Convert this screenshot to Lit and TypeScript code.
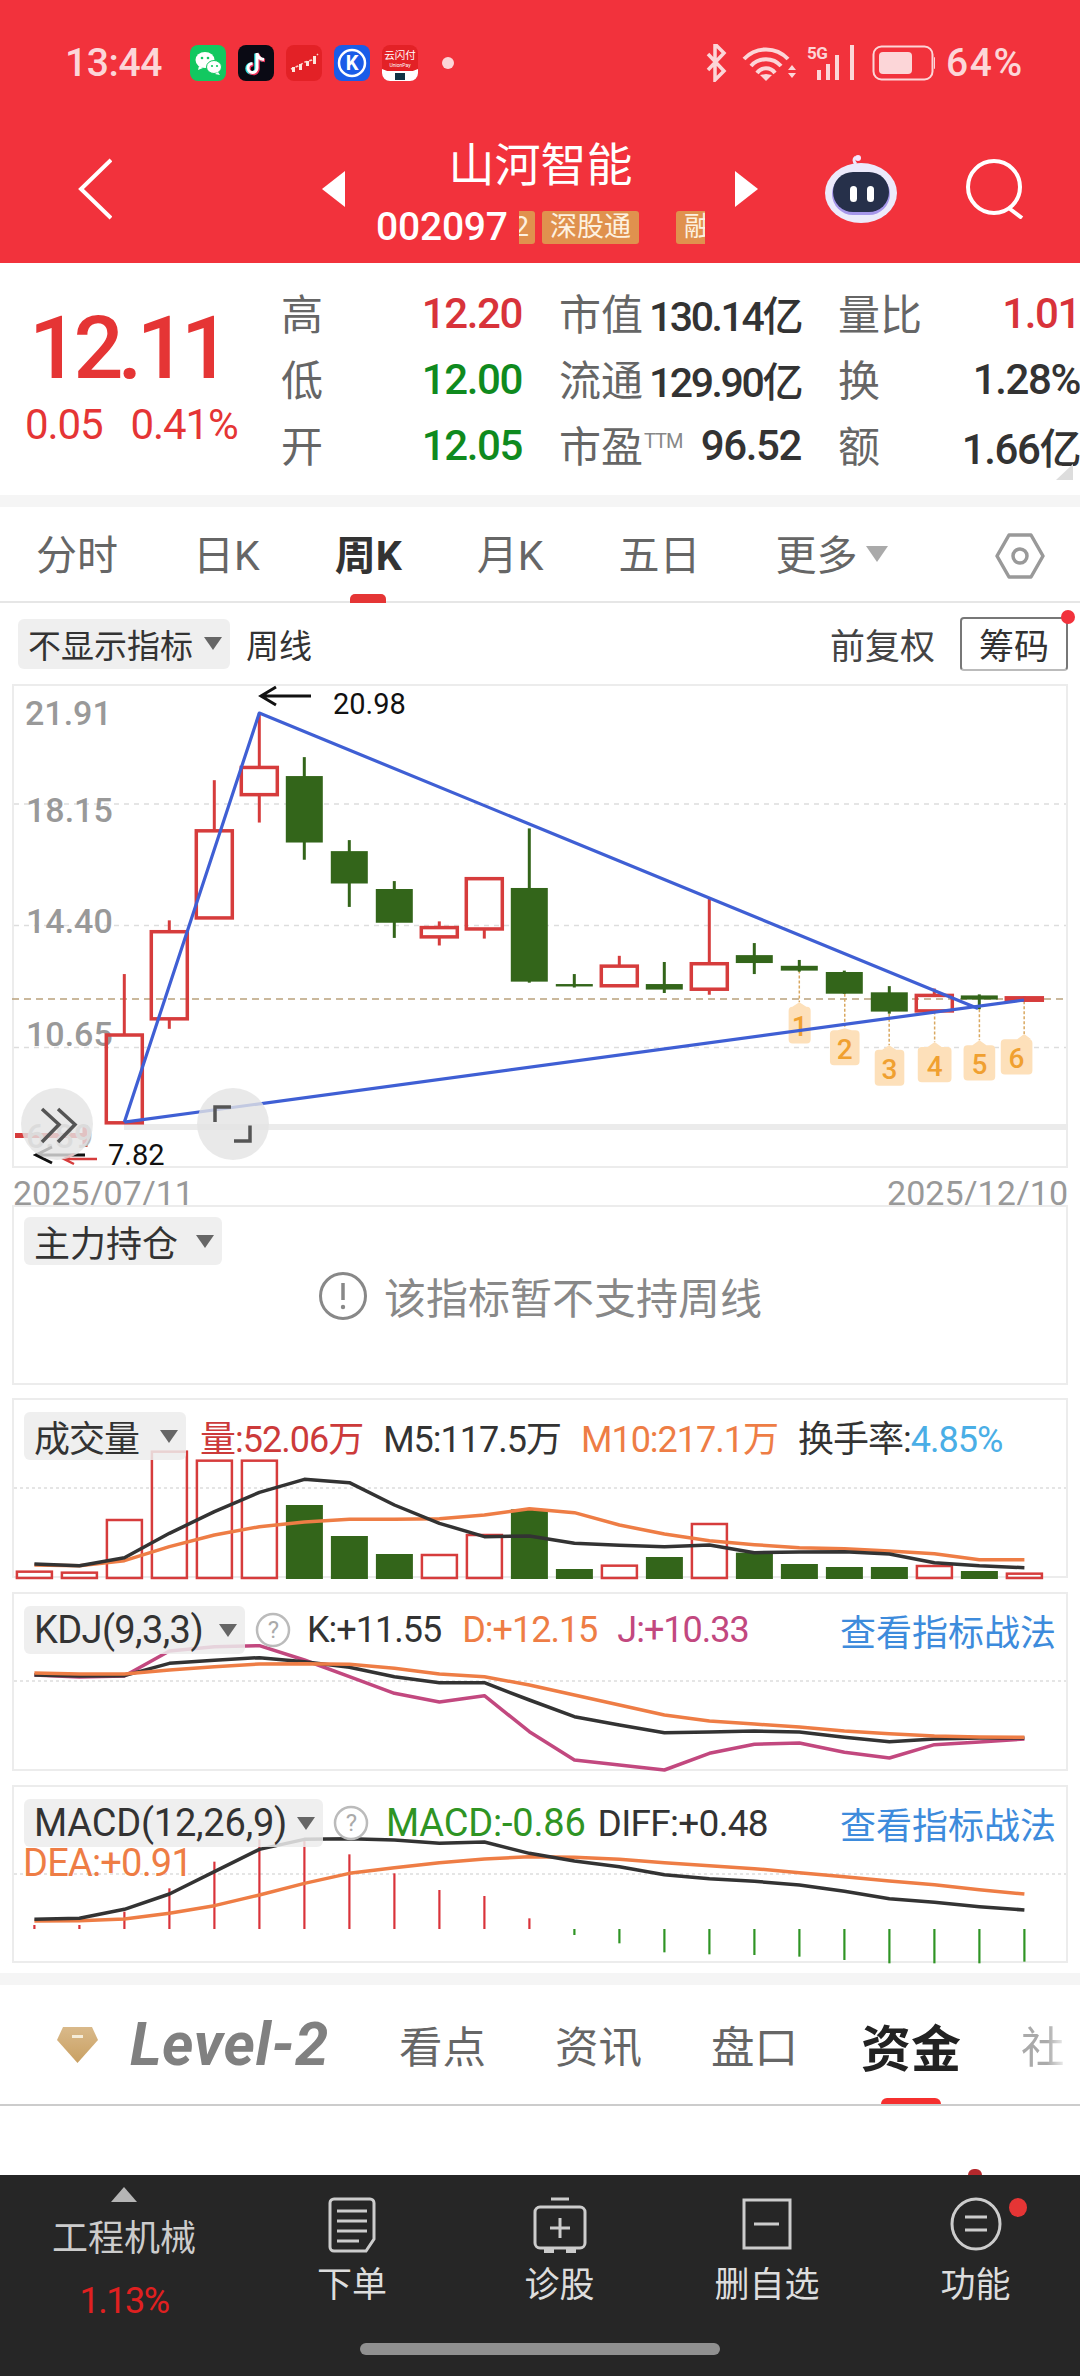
import { LitElement, html, css, svg } from "lit";
import { customElement } from "lit/decorators.js";

const Z = (v: number) => v / 2.904;
const Y = (v: number) => 670 + v / 2.904;
const cx = (i: number) => 124.3 + 45 * i;
const vx = (i: number) => 34.4 + 45 * i;
const RED = "#d63c3c";
const GREEN = "#33651a";

const candles: [string, number, number, number, number][] = [
  ["r", 883, 1060, 1315, 1315], ["r", 727, 760, 1013, 1042], ["r", 320, 467, 720, 720], ["r", 125, 283, 362, 443],
  ["g", 253, 308, 501, 551], ["g", 494, 526, 620, 688], ["g", 613, 636, 734, 778], ["r", 730, 748, 775, 800],
  ["r", 606, 606, 752, 780], ["g", 460, 633, 905, 908], ["g", 883, 912, 919, 922], ["r", 830, 860, 917, 917],
  ["g", 848, 912, 928, 938], ["r", 663, 853, 927, 943], ["g", 793, 828, 851, 883], ["g", 842, 859, 873, 876],
  ["g", 873, 877, 940, 940], ["g", 918, 936, 992, 998], ["r", 925, 945, 990, 992], ["g", 942, 945, 957, 985],
  ["r", 948, 952, 959, 962],
];
const tags: [number, number, number, number, number, number, number, string][] = [
  [753, 873, 965, 722, 786, 978, 1085, "1"], [885, 940, 1040, 842, 928, 1046, 1148, "2"], [1014, 998, 1090, 972, 1058, 1103, 1207, "3"],
  [1146, 992, 1080, 1097, 1195, 1095, 1197, "4"], [1276, 985, 1075, 1230, 1322, 1090, 1192, "5"], [1406, 962, 1057, 1338, 1430, 1072, 1175, "6"],
];
const volTops = [545, 548, 390, 185, 212, 212, 345, 438, 492, 495, 435, 358, 537, 527, 501, 402, 488, 522, 531, 531, 528, 543, 551];
const volRed = [0, 1, 2, 3, 4, 5, 9, 10, 13, 15, 20, 22];
const m5 = [522, 527, 503, 430, 365, 307, 268, 278, 345, 400, 440, 438, 460, 466, 470, 465, 488, 486, 485, 492, 518, 527, 533];
const m10 = [525, 527, 512, 470, 435, 410, 396, 388, 388, 386, 375, 356, 368, 405, 432, 452, 464, 473, 476, 483, 491, 509, 509];
const kK = [285, 288, 287, 250, 241, 233, 245, 262, 290, 308, 308, 360, 410, 435, 458, 456, 453, 456, 472, 485, 477, 474, 474];
const kD = [279, 282, 282, 270, 260, 252, 251, 253, 265, 282, 290, 315, 345, 375, 405, 423, 432, 441, 453, 461, 468, 471, 472];
const kJ = [285, 291, 288, 213, 200, 197, 240, 290, 340, 366, 347, 455, 540, 555, 570, 520, 493, 489, 517, 534, 494, 486, 477];
const mBars = [1035, 1035, 995, 925, 845, 778, 780, 823, 880, 930, 948, 1015, 1065, 1090, 1117, 1123, 1125, 1130, 1140, 1150, 1150, 1150, 1145];
const diff = [1018, 1015, 988, 942, 875, 808, 778, 776, 780, 790, 786, 820, 843, 860, 884, 896, 904, 915, 934, 956, 967, 980, 990];
const dea = [1023, 1022, 1017, 1000, 977, 945, 910, 880, 863, 848, 837, 830, 832, 838, 848, 857, 866, 878, 890, 903, 914, 929, 942];

const line = (vals: number[], base: number, color: string, w = 3.5) =>
  svg`<polyline fill="none" stroke=${color} stroke-width=${w} stroke-linejoin="round" points=${vals.map((v, i) => `${vx(i)},${base + v / 3}`).join(" ")}></polyline>`;

@customElement("app-root")
export class AppRoot extends LitElement {
  static styles = css`
    :host { display: block; width: 1080px; height: 2376px; overflow: hidden; background: #fff; font-family: Roboto, "Noto Sans CJK SC", sans-serif; color: #333; }
    .hdr { height: 263px; background: #f2323c; display: flex; flex-direction: column; }
    .status { height: 90px; padding: 43px 56px 0 65px; box-sizing: border-box; display: flex; align-items: flex-start; color: #fcd6d8; }
    .time { font-size: 39px; line-height: 40px; font-weight: 500; width: 125px; letter-spacing: -.4px; }
    .apps { display: flex; gap: 12px; margin-top: 2px; }
    .apps svg { display: block; }
    .sdot { width: 12px; height: 12px; border-radius: 50%; background: #fcd6d8; margin: 14px 0 0 24px; }
    .sright { margin-left: auto; display: flex; align-items: center; height: 40px; }
    .sright svg { display: block; width: 232px; }
    .pct { font-size: 39px; font-weight: 500; line-height: 40px; margin-left: 11px; letter-spacing: 1.6px; width: 78px; white-space: nowrap; }
    .nav { height: 173px; padding-top: 25px; box-sizing: border-box; display: flex; align-items: center; padding-left: 78px; }
    .nav svg { display: block; flex: none; }
    .tl { margin-left: 210px; }
    .mid { width: 329px; margin-left: 31px; padding-top: 6px; display: flex; flex-direction: column; align-items: center; color: #fff; }
    .title { font-size: 46px; line-height: 46px; padding-top: 2px; }
    .coderow { width: 100%; margin-top: 23px; display: flex; align-items: center; height: 33px; }
    .code { font-size: 39px; width: 143px; letter-spacing: -.2px; line-height: 33px; font-weight: 500; }
    .strip { width: 186px; overflow: hidden; display: flex; height: 33px; }
    .tag { flex: none; background: #e0914e; color: #fdf1e0; font-size: 27px; line-height: 33px; height: 33px; padding: 0 8px; border-radius: 3px; }
    .tag.l2tag { margin-left: -26px; width: 42px; padding: 0 6px 0 0; text-align: right; margin-right: 7px; box-sizing: border-box; }
    .tag.m { margin-left: 37px; }
    .tr { margin-left: 30px; }
    .robot { margin-left: 67px; }
    .search { margin-left: 69px; }

    .quote { height: 232px; display: flex; box-sizing: border-box; position: relative; }
    .pr { width: 281px; box-sizing: border-box; padding: 47px 0 0 26px; color: #e53535; flex: none; }
    .big { font-size: 88px; line-height: 76px; font-weight: 500; letter-spacing: -5.6px; margin-left: 3px; }
    .subs { display: flex; gap: 28px; margin-top: 21px; font-size: 42px; line-height: 36px; letter-spacing: -1.1px; margin-left: -1px; }
    .qgrid { display: grid; grid-template-columns: 241px 242px 242px; column-gap: 37px; grid-auto-rows: 66px; padding-top: 17px; height: 198px; }
    .cell { display: flex; justify-content: space-between; align-items: center; font-size: 40px; white-space: nowrap; }
    .lb { color: #666; font-size: 42px; margin-bottom: 4px; }
    .val { font-size: 42px; letter-spacing: -1.4px; color: #333; font-weight: 500; }
    .val.m { font-size: 41px; letter-spacing: -2.4px; }
    .val.r { color: #d8333a; }
    .val.g { color: #0f8a1e; }
    .ttm { font-size: 20px; color: #888; vertical-align: 14px; letter-spacing: -1px; margin-left: 1px; }
    .corner { position: absolute; right: 7px; bottom: 15px; width: 0; height: 0; border-left: 17px solid transparent; border-bottom: 16px solid #ddd; }
    .band { height: 12px; background: #f5f5f5; }

    .tabs { height: 96px; box-sizing: border-box; border-bottom: 2px solid #e6e6e6; display: flex; align-items: center; padding: 4px 35px 0 36px; gap: 75px; color: #666; font-size: 41px; }
    .tab { position: relative; white-space: nowrap; line-height: 50px; }
    .tab.on { font-weight: 700; color: #333; }
    .tab.on::after { content: ""; position: absolute; left: 15px; width: 36px; height: 9px; bottom: -22px; background: #e53535; border-radius: 5px 5px 0 0; }
    .tab .tri { display: inline-block; width: 0; height: 0; border: 11px solid transparent; border-top: 16px solid #aaa; border-bottom: 0; margin-left: 8px; vertical-align: 8px; }
    .hex { margin-left: auto; display: block; }

    .tool { height: 81px; display: flex; align-items: center; padding: 0 12px 0 18px; font-size: 33px; }
    .chip { display: inline-flex; align-items: center; height: 48px; background: rgba(236,236,236,.85); border-radius: 6px; padding: 0 8px 0 10px; font-size: 36px; color: #333; white-space: nowrap; position: relative; z-index: 1; box-sizing: border-box; justify-content: space-between; flex: none; }
    .chip i { width: 0; height: 0; border: 9px solid transparent; border-top: 13px solid #666; border-bottom: 0; flex: none; }
    .tool .chip { height: 50px; width: 212px; font-size: 33px; }
    .tool .w { margin-left: 16px; }
    .fq { margin-left: auto; color: #444; font-size: 35px; }
    .cm { margin-left: 25px; width: 108px; height: 54px; box-sizing: border-box; border: 2px solid #777; border-bottom-color: #bbb; border-radius: 4px; display: flex; align-items: center; justify-content: center; font-size: 35px; position: relative; }
    .cm::after { content: ""; position: absolute; right: -9px; top: -9px; width: 14px; height: 14px; border-radius: 50%; background: #f2323c; }

    .panel { margin: 0 12px; border: 2px solid #ececec; box-sizing: border-box; position: relative; }
    .panel > svg { position: absolute; left: -14px; top: -2px; width: 1080px; display: block; overflow: visible; }
    .main { height: 484px; }
    .dates { height: 37px; padding: 10px 12px 0 13px; box-sizing: border-box; display: flex; justify-content: space-between; color: #999; font-size: 34px; line-height: 31px; }
    .hold { height: 180px; margin-bottom: 13px; padding: 10px; }
    .hold .chip { width: 198px; letter-spacing: 0; }
    .empty { display: flex; align-items: center; justify-content: center; gap: 16px; margin-top: 0; color: #888; font-size: 42px; }
    .empty svg { display: block; }
    .vol { height: 180px; margin-bottom: 14px; }
    .kdj { height: 179px; margin-bottom: 14px; }
    .macd { height: 178px; margin-bottom: 10px; }
    .ph { display: flex; align-items: center; padding: 10px 0 0 10px; font-size: 36px; position: relative; white-space: nowrap; letter-spacing: -1px; }
    .ph .chip.a { width: 162px; }
    .ph .chip.b { width: 221px; font-size: 38px; letter-spacing: -.6px; }
    .ph .chip.c { width: 299px; font-size: 38px; letter-spacing: -.2px; }
    .ph .q { margin-left: 10px; display: block; }
    .ph .lnk { margin-left: auto; margin-right: 10px; color: #3d8bdc; font-size: 36px; letter-spacing: 0; }
    .s1 { margin-left: 14px; } .s2 { margin-left: 20px; } .s3 { margin-left: 16px; } .s4 { margin-left: 21px; } .s5 { margin-left: 20px; }
    .s6 { margin-left: 17px; font-size: 38px; letter-spacing: -.2px; } .s7 { margin-left: 12px; font-size: 37px; letter-spacing: -.7px; }
    .c-r { color: #cc3a3a; } .c-o { color: #ee7d45; } .c-k { color: #333; } .c-b { color: #4aaee6; } .c-p { color: #c2487f; } .c-g { color: #2f9424; }
    .dea { position: relative; margin: -3px 0 0 9px; font-size: 38px; line-height: 34px; color: #ee7d45; letter-spacing: -.8px; }

    .l2 { height: 121px; box-sizing: border-box; border-bottom: 2px solid #ccc; display: flex; align-items: center; padding: 0 0 0 57px; overflow: hidden; color: #666; font-size: 43.5px; white-space: nowrap; }
    .l2 .gem { display: block; flex: none; }
    .lv { font-size: 60px; font-weight: 700; font-style: italic; color: #808080; margin: 0 70px 0 32px; letter-spacing: .6px; line-height: 60px; }
    .l2 span.t { position: relative; margin-right: 69px; flex: none; }
    .l2 span.act { font-size: 50px; font-weight: 700; color: #222; margin-left: -6px; margin-right: 60px; }
    .l2 span.act::after { content: ""; position: absolute; left: 20px; width: 60px; height: 12px; bottom: -29px; background: #f5302f; border-radius: 6px 6px 0 0; }
    .l2 span.fade { color: #aaa; -webkit-mask-image: linear-gradient(to right, #000 30%, transparent 55%); mask-image: linear-gradient(to right, #000 30%, transparent 55%); }
    .gap { height: 69px; position: relative; }
    .gap::after { content: ""; position: absolute; left: 968px; bottom: 0; width: 14px; height: 6px; border-radius: 7px 7px 0 0; background: #b5282c; }

    .bar { height: 201px; background: #262626; display: grid; grid-template-columns: 248px 208px 207px 208px 209px; color: #ddd; position: relative; }
    .bi { display: flex; flex-direction: column; align-items: center; padding-top: 22px; font-size: 35px; line-height: 44px; white-space: nowrap; }
    .bi svg { display: block; margin-bottom: 11px; }
    .b0 { padding-top: 12px; }
    .b0 .up { width: 0; height: 0; border: 13px solid transparent; border-bottom: 15px solid #b5b5b5; border-top: 0; }
    .b0 .nm { margin-top: 15px; font-size: 36px; line-height: 44px; color: #ccc; }
    .b0 .p { margin-top: 18px; font-size: 36px; line-height: 44px; color: #e02020; letter-spacing: -1.5px; }
    .home { position: absolute; left: 360px; width: 360px; top: 168px; height: 12px; background: #909090; border-radius: 6px; }
    .dot2 { position: absolute; left: 1009px; top: 23px; width: 18px; height: 19px; border-radius: 50%; background: #e53535; }
    svg text { font-family: Roboto, "Noto Sans CJK SC", sans-serif; }
    .ax { fill: #999; font-size: 34px; font-weight: 500; }
    .anno { fill: #111; font-size: 29px; }
    .tn { fill: #f0a030; font-size: 28px; text-anchor: middle; font-weight: 500; }
    .qm { fill: #aaa; font-size: 24px; text-anchor: middle; }
  `;

  private qIcon() {
    return html`<svg class="q" width="36" height="36" viewBox="0 0 36 36"><circle cx="18" cy="18" r="16" fill="#fff" stroke="#bbb" stroke-width="2.5"></circle><text x="18" y="26" class="qm">?</text></svg>`;
  }

  private statusIcons() {
    return html`
      <div class="apps">
        <svg width="36" height="36" viewBox="0 0 36 36"><rect width="36" height="36" rx="8" fill="#12c860"/><ellipse cx="15" cy="15" rx="9.5" ry="8" fill="#fff"/><path d="M9 21l-1 4 5-2z" fill="#fff"/><ellipse cx="24" cy="22" rx="7.5" ry="6.5" fill="#fff" stroke="#12c860"/><path d="M28 27l2 3-5-1z" fill="#fff"/><circle cx="12" cy="13" r="1.3" fill="#12c860"/><circle cx="18" cy="13" r="1.3" fill="#12c860"/><circle cx="22" cy="21" r="1.1" fill="#12c860"/><circle cx="27" cy="21" r="1.1" fill="#12c860"/></svg>
        <svg width="36" height="36" viewBox="0 0 36 36"><rect width="36" height="36" rx="8" fill="#0a0a14"/><path d="M19 8v15a4.5 4.5 0 1 1-4.500-4.500M19 8c.5 4 3 6 7 6.500" fill="none" stroke="#2ce8e8" stroke-width="3.500" transform="translate(-1 .5)"/><path d="M19 8v15a4.500 4.500 0 1 1-4.500-4.500M19 8c.5 4 3 6 7 6.500" fill="none" stroke="#f0305a" stroke-width="3.500" transform="translate(1 1)"/><path d="M19 8v15a4.500 4.500 0 1 1-4.500-4.500M19 8c.5 4 3 6 7 6.500" fill="none" stroke="#fff" stroke-width="3"/></svg>
        <svg width="36" height="36" viewBox="0 0 36 36"><rect width="36" height="36" rx="8" fill="#e32126"/><path d="M5 24l7-3 7-4 7-2 6-6" fill="none" stroke="#fbd0c8" stroke-width="1.500" stroke-dasharray="3 2"/><g fill="#fde6dc"><rect x="6" y="22" width="3" height="5"/><rect x="13" y="19" width="3" height="6"/><rect x="20" y="16" width="3" height="5"/><rect x="27" y="11" width="3" height="8"/></g></svg>
        <svg width="36" height="36" viewBox="0 0 36 36"><rect width="36" height="36" rx="8" fill="#1a5ce8"/><circle cx="18" cy="18" r="13" fill="none" stroke="#fff" stroke-width="2.500"/><text x="18" y="25" font-size="20" font-weight="700" fill="#fff" text-anchor="middle">K</text></svg>
        <svg width="36" height="36" viewBox="0 0 36 36"><rect width="36" height="36" rx="8" fill="#e32126"/><path d="M0 26h36v2a8 8 0 0 1-8 8H8a8 8 0 0 1-8-8z" fill="#fff"/><path d="M0 24q18 8 36 0v4H0z" fill="#fff"/><rect x="13" y="28" width="10" height="7" fill="#134"/><text x="18" y="14" font-size="10.500" fill="#fff" text-anchor="middle">云闪付</text><text x="18" y="22" font-size="5" fill="#fff" text-anchor="middle">UnionPay</text></svg>
      </div>
      <div class="sdot"></div>
      <div class="sright">
        <svg height="38" viewBox="703 45 232 38">
          <path d="M708 55l16 17-9 9V45l9 9-16 17" fill="none" stroke="#fcd6d8" stroke-width="3.500"/>
          <path d="M744 60a30 30 0 0 1 44 0M751 67a20 20 0 0 1 30 0M757 74a11 11 0 0 1 18 0" fill="none" stroke="#fcd6d8" stroke-width="4"/>
          <path d="M760 76l6-1 6 1-6 6z" fill="#fcd6d8"/>
          <path d="M788 71l4-5 4 5zM788 74l4 5 4-5z" fill="#fcd6d8"/>
          <text x="807" y="60" font-size="17" font-weight="700" fill="#fcd6d8" letter-spacing="-.5">5G</text>
          <g fill="#fcd6d8"><rect x="817" y="71" width="4" height="10"/><rect x="826" y="65" width="4" height="16"/><rect x="835" y="56" width="4" height="25"/><rect x="850" y="46" width="4" height="35" /></g>
          <rect x="873.500" y="47.500" width="59" height="33" rx="8" fill="none" stroke="#fcd6d8" stroke-width="2"/>
          <rect x="879" y="53" width="33" height="22" rx="4" fill="#fcd6d8"/>
          <rect x="934" y="58" width="3" height="12" rx="1" fill="#fcd6d8"/>
        </svg>
        <span class="pct">64%</span>
      </div>`;
  }

  private mainChart() {
    return svg`<svg height="484" viewBox="0 684 1080 484">
      ${[804, 925.5, 1047.4].map((y) => svg`<line x1="14" x2="1066" y1=${y} y2=${y} stroke="#ddd" stroke-width="1.500" stroke-dasharray="5 5"></line>`)}
      <rect x="124" y="1124" width="944" height="6" fill="#ebebeb"></rect>
      <line x1="12" x2="1064" y1="999" y2="999" stroke="#b9a17c" stroke-width="1.500" stroke-dasharray="7 5"></line>
      <text class="ax" x="25" y="725">21.91</text>
      <text class="ax" x="26" y="821.500">18.15</text>
      <text class="ax" x="26" y="933">14.40</text>
      <text class="ax" x="26" y="1046">10.65</text>
      ${tags.map((t) => svg`<line x1=${540 + Z(t[0])} x2=${540 + Z(t[0])} y1=${Y(t[1])} y2=${Y(t[2])} stroke="#d9a860" stroke-width="1.500" stroke-dasharray="3 2"></line>
        <path fill="#fde0ba" d="M${540 + Z(t[3]) + 4} ${Y(t[5])} H${540 + Z(t[0]) - 7} L${540 + Z(t[0])} ${Y(t[2])} L${540 + Z(t[0]) + 7} ${Y(t[5])} H${540 + Z(t[4]) - 4} q4 0 4 4 V${Y(t[6]) - 4} q0 4 -4 4 H${540 + Z(t[3]) + 4} q-4 0 -4 -4 V${Y(t[5]) + 4} q0 -4 4 -4z"></path>
        <text class="tn" x=${540 + Z((t[3] + t[4]) / 2)} y=${Y((t[5] + t[6]) / 2) + 11}>${t[7]}</text>`)}
      ${candles.map((c, i) => {
        const x = cx(i);
        return c[0] === "r"
          ? svg`<line x1=${x} x2=${x} y1=${Y(c[1])} y2=${Y(c[2])} stroke=${RED} stroke-width="3"></line>
                <line x1=${x} x2=${x} y1=${Y(c[3])} y2=${Y(c[4])} stroke=${RED} stroke-width="3"></line>
                <rect x=${x - 18} y=${Y(c[2])} width="36" height=${Z(c[3] - c[2])} fill="none" stroke=${RED} stroke-width="3.500"></rect>`
          : svg`<line x1=${x} x2=${x} y1=${Y(c[1])} y2=${Y(c[4])} stroke=${GREEN} stroke-width="3"></line>
                <rect x=${x - 18.5} y=${Y(c[2])} width="37" height=${Z(c[3] - c[2])} fill=${GREEN}></rect>`;
      })}
      <g fill="none" stroke="#3f5fd4" stroke-width="3.200" stroke-linejoin="round">
        <polyline points="${Z(361)},${Y(1313)} ${Z(753)},${Y(125)} 978,1008.500"></polyline>
        <polyline points="${Z(361)},${Y(1313)} 1024,1000"></polyline>
      </g>
      <path d="M311 696H261M276 687l-15 9 15 9" fill="none" stroke="#111" stroke-width="3"></path>
      <text class="anno" x="333" y="714">20.98</text>
      <path d="M15 1135.500H85M85 1125v22" stroke=${RED} stroke-width="5" fill="none"></path>
      <text x="26" y="1148" font-size="34" font-weight="500" fill="#bbb">6.89</text>
      <path d="M85 1155H36M52 1147l-16 8 16 8" fill="none" stroke="#111" stroke-width="3"></path>
      <path d="M97 1159H64M74 1154l-10 5 10 5" fill="none" stroke=${RED} stroke-width="2.500"></path>
      <text class="anno" x="108" y="1165">7.82</text>
      <circle cx="57" cy="1124" r="36" fill="#e4e4e4" fill-opacity=".8"></circle>
      <circle cx="233" cy="1124" r="36" fill="#e4e4e4" fill-opacity=".8"></circle>
      <path d="M42 1109l17 15.500-17 17.500M58 1109l17 15.500-17 17.500" fill="none" stroke="#555" stroke-width="3.500"></path>
      <path d="M215 1122v-15h16M234 1141h16v-15.500" fill="none" stroke="#555" stroke-width="3.500"></path>
    </svg>`;
  }

  private volChart() {
    return svg`<svg height="180" viewBox="0 1398 1080 180">
      <line x1="14" x2="1066" y1="1488" y2="1488" stroke="#ddd" stroke-width="1.500" stroke-dasharray="3 3"></line>
      ${volTops.map((t, i) => {
        const y = 1390 + t / 3;
        return volRed.includes(i)
          ? svg`<rect x=${vx(i) - 17.5} y=${y} width="35" height=${1578 - y} fill="none" stroke=${RED} stroke-width="2.500"></rect>`
          : svg`<rect x=${vx(i) - 18.5} y=${y} width="37" height=${1579 - y} fill=${GREEN}></rect>`;
      })}
      ${line(m10, 1390, "#ee7d45")}
      ${line(m5, 1390, "#333")}
    </svg>`;
  }

  private kdjChart() {
    return svg`<svg height="179" viewBox="0 1592 1080 179">
      <line x1="14" x2="1066" y1="1681" y2="1681" stroke="#ddd" stroke-width="1.500" stroke-dasharray="3 3"></line>
      ${line(kJ, 1580, "#c2487f")}
      ${line(kK, 1580, "#333")}
      ${line(kD, 1580, "#ee7d45")}
    </svg>`;
  }

  private macdChart() {
    return svg`<svg height="178" viewBox="0 1785 1080 178">
      <line x1="14" x2="1066" y1="1874" y2="1874" stroke="#ddd" stroke-width="1.500" stroke-dasharray="3 3"></line>
      ${mBars.map((t, i) => {
        const y = 1580 + t / 3;
        return i < 12
          ? svg`<line x1=${vx(i)} x2=${vx(i)} y1=${y} y2="1929" stroke="#d9333a" stroke-width="2.200"></line>`
          : svg`<line x1=${vx(i)} x2=${vx(i)} y1="1929" y2=${y} stroke="#2f9424" stroke-width="2.200"></line>`;
      })}
      ${line(dea, 1580, "#ee7d45")}
      ${line(diff, 1580, "#333")}
    </svg>`;
  }

  render() {
    return html`
      <div class="hdr">
        <div class="status"><span class="time">13:44</span>${this.statusIcons()}</div>
        <div class="nav">
          <svg width="34" height="62" viewBox="0 0 34 62"><path d="M33 2L3 31l30 29" fill="none" stroke="#fff" stroke-width="4"/></svg>
          <svg class="tl" width="23" height="36" viewBox="0 0 23 36"><path d="M23 0v36L0 18z" fill="#fff"/></svg>
          <div class="mid">
            <div class="title">山河智能</div>
            <div class="coderow"><span class="code">002097</span>
              <div class="strip"><span class="tag l2tag">L2</span><span class="tag">深股通</span><span class="tag m">融资融券</span></div>
            </div>
          </div>
          <svg class="tr" width="23" height="36" viewBox="0 0 23 36"><path d="M0 0v36l23-18z" fill="#fff"/></svg>
          <svg class="robot" width="72" height="68" viewBox="0 0 72 68"><path d="M31 9q-4-4 0-7" fill="none" stroke="#ece9fb" stroke-width="3"/><circle cx="33" cy="3" r="3" fill="#f5e6ff"/><ellipse cx="36" cy="38" rx="36" ry="30" fill="#eceafb"/><rect x="7" y="18" width="58" height="42" rx="21" fill="#a596ea"/><rect x="8" y="17" width="56" height="40" rx="20" fill="#26304a"/><rect x="25" y="31" width="7" height="16" rx="3.500" fill="#fff"/><rect x="42" y="31" width="7" height="16" rx="3.500" fill="#fff"/></svg>
          <svg class="search" width="58" height="60" viewBox="0 0 58 60"><circle cx="28" cy="28" r="26" fill="none" stroke="#fff" stroke-width="4"/><path d="M44 50l12 9" stroke="#fff" stroke-width="4"/></svg>
        </div>
      </div>

      <div class="quote">
        <div class="pr"><div class="big">12.11</div><div class="subs"><span>0.05</span><span>0.41%</span></div></div>
        <div class="qgrid">
          <div class="cell"><span class="lb">高</span><span class="val r">12.20</span></div>
          <div class="cell"><span class="lb">市值</span><span class="val m">130.14亿</span></div>
          <div class="cell"><span class="lb">量比</span><span class="val r">1.01</span></div>
          <div class="cell"><span class="lb">低</span><span class="val g">12.00</span></div>
          <div class="cell"><span class="lb">流通</span><span class="val m">129.90亿</span></div>
          <div class="cell"><span class="lb">换</span><span class="val">1.28%</span></div>
          <div class="cell"><span class="lb">开</span><span class="val g">12.05</span></div>
          <div class="cell"><span class="lb">市盈<span class="ttm">TTM</span></span><span class="val">96.52</span></div>
          <div class="cell"><span class="lb">额</span><span class="val">1.66亿</span></div>
        </div>
        <div class="corner"></div>
      </div>
      <div class="band"></div>

      <div class="tabs">
        <span class="tab">分时</span><span class="tab">日K</span><span class="tab on">周K</span><span class="tab">月K</span><span class="tab">五日</span>
        <span class="tab">更多<span class="tri"></span></span>
        <svg class="hex" width="50" height="46" viewBox="0 0 50 46"><path d="M14 2h22l12 21-12 21H14L2 23z" fill="none" stroke="#999" stroke-width="3.500" stroke-linejoin="round"/><circle cx="25" cy="23" r="7" fill="none" stroke="#999" stroke-width="3.500"/></svg>
      </div>
      <div class="tool">
        <span class="chip">不显示指标<i></i></span><span class="w">周线</span>
        <span class="fq">前复权</span><span class="cm">筹码</span>
      </div>

      <div class="panel main">${this.mainChart()}</div>
      <div class="dates"><span>2025/07/11</span><span>2025/12/10</span></div>

      <div class="panel hold">
        <span class="chip">主力持仓<i></i></span>
        <div class="empty">
          <svg width="50" height="50" viewBox="0 0 50 50"><circle cx="25" cy="25" r="22.500" fill="none" stroke="#888" stroke-width="3"/><path d="M25 12v17" stroke="#888" stroke-width="3.500"/><circle cx="25" cy="36" r="2.200" fill="#888"/></svg>
          <span>该指标暂不支持周线</span>
        </div>
      </div>

      <div class="panel vol">${this.volChart()}
        <div class="ph"><span class="chip a">成交量<i></i></span>
          <span class="c-r s1">量:52.06万</span>
          <span class="c-k s2">M5:117.5万</span>
          <span class="c-o s2">M10:217.1万</span>
          <span class="c-k s2">换手率:<span class="c-b">4.85%</span></span>
        </div>
      </div>
      <div class="panel kdj">${this.kdjChart()}
        <div class="ph"><span class="chip b">KDJ(9,3,3)<i></i></span>${this.qIcon()}
          <span class="c-k s3">K:+11.55</span>
          <span class="c-o s4">D:+12.15</span>
          <span class="c-p s5">J:+10.33</span>
          <span class="lnk">查看指标战法</span>
        </div>
      </div>
      <div class="panel macd">${this.macdChart()}
        <div class="ph"><span class="chip c">MACD(12,26,9)<i></i></span>${this.qIcon()}
          <span class="c-g s6">MACD:-0.86</span>
          <span class="c-k s7">DIFF:+0.48</span>
          <span class="lnk">查看指标战法</span>
        </div>
        <div class="dea">DEA:+0.91</div>
      </div>
      <div class="band"></div>

      <div class="l2">
        <svg class="gem" width="41" height="36" viewBox="0 0 41 36"><defs><linearGradient id="gm" x1="0" x2="0" y1="0" y2="1"><stop offset="0" stop-color="#d9b98a"/><stop offset="1" stop-color="#c9a062"/></linearGradient></defs><path d="M6 0h29l6 13-20.500 23L0 13z" fill="url(#gm)"/><rect x="15" y="8" width="11" height="3" fill="#f5ecd8"/></svg>
        <span class="lv">Level-2</span>
        <span class="t">看点</span><span class="t">资讯</span><span class="t">盘口</span><span class="t act">资金</span><span class="t fade">社区</span>
      </div>
      <div class="gap"></div>

      <div class="bar">
        <div class="bi b0"><span class="up"></span><span class="nm">工程机械</span><span class="p">1.13%</span></div>
        <div class="bi"><svg width="50" height="56" viewBox="0 0 50 56"><path d="M7 2h36a4 4 0 0 1 4 4v36l-8 12H7a4 4 0 0 1-4-4V6a4 4 0 0 1 4-4z" fill="none" stroke="#ccc" stroke-width="3"/><path d="M10 14h30M10 24h30M10 34h30M10 44h22" stroke="#ccc" stroke-width="3"/></svg><span>下单</span></div>
        <div class="bi"><svg width="58" height="56" viewBox="0 0 58 56"><path d="M20 2h18M9 10h40a5 5 0 0 1 5 5v31a5 5 0 0 1-5 5H9a5 5 0 0 1-5-5V15a5 5 0 0 1 5-5z" fill="none" stroke="#ccc" stroke-width="3"/><path d="M14 51v4h8v-4M36 51v4h8v-4" fill="#ccc" stroke="#ccc" stroke-width="2"/><path d="M29 21v20M19 31h20" stroke="#ccc" stroke-width="3"/></svg><span>诊股</span></div>
        <div class="bi"><svg width="50" height="56" viewBox="0 0 50 56"><rect x="2" y="3" width="46" height="48" fill="none" stroke="#ccc" stroke-width="3"/><path d="M12 27h25" stroke="#ccc" stroke-width="3"/></svg><span>删自选</span></div>
        <div class="bi"><svg width="52" height="56" viewBox="0 0 52 56"><ellipse cx="26" cy="27" rx="24" ry="25" fill="none" stroke="#ccc" stroke-width="3"/><path d="M15 20h22M15 33h22" stroke="#ccc" stroke-width="3"/></svg><span>功能</span></div>
        <div class="dot2"></div>
        <div class="home"></div>
      </div>
    `;
  }
}
